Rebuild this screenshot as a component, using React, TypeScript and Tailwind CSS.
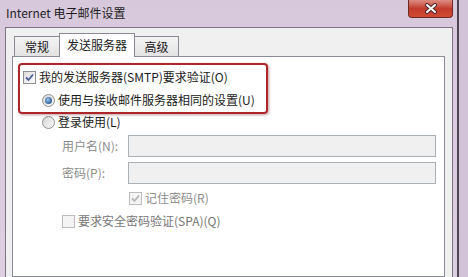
import React from 'react';

const font = { fontFamily: '"Noto Sans CJK SC", "Noto Sans", sans-serif' };

function CheckBox({ checked, disabled }: { checked?: boolean; disabled?: boolean }) {
  return (
    <span
      className={`flex h-[13px] w-[13px] shrink-0 items-center justify-center border ${
        disabled ? 'border-[#bcbcbc] bg-[#f4f4f4]' : 'border-[#8e8f8f] bg-gradient-to-br from-[#dcdcdc] to-[#fdfdfd]'
      }`}
    >
      {checked && (
        <svg width="9" height="9" viewBox="0 0 9 9">
          <path
            d="M1 4.5 L3.5 7 L8 1.5"
            fill="none"
            stroke={disabled ? '#b5b5b5' : '#4a5f97'}
            strokeWidth="1.8"
          />
        </svg>
      )}
    </span>
  );
}

function Radio({ checked }: { checked?: boolean }) {
  return (
    <span className="flex h-[13px] w-[13px] shrink-0 items-center justify-center rounded-full border border-[#8e8f8f] bg-gradient-to-br from-[#d6d6d6] to-[#fafafa]">
      {checked && (
        <span className="h-[7px] w-[7px] rounded-full bg-[radial-gradient(circle_at_40%_40%,#9cc3ea,#2c5f9c_70%)]" />
      )}
    </span>
  );
}

function Tab({ label, active }: { label: string; active?: boolean }) {
  if (active) {
    return (
      <div className="-ml-px flex h-[24px] w-[76px] items-center justify-center border border-b-0 border-[#898c95] bg-white pb-[1px] text-[12px] text-[#1a1a1a]">
        {label}
      </div>
    );
  }
  return (
    <div className="-ml-px flex h-[21px] w-[46px] items-center justify-center border border-[#898c95] bg-gradient-to-b from-[#f3f3f3] to-[#e3e3e3] text-[12px] text-[#1a1a1a] first:ml-[2px]">
      {label}
    </div>
  );
}

export default function App() {
  return (
    <div className="flex h-[277px] w-[468px] overflow-hidden bg-[#d3c3d8]" style={font}>
      <div className="flex h-full w-[459px] shrink-0 flex-col border-r-2 border-[#4d4752] bg-gradient-to-b from-[#d8c8dc] to-[#dccfe0]">
        {/* title bar */}
        <div className="flex h-[27px] shrink-0 items-start">
          <span className="pl-[6px] pt-[5px] text-[12px] leading-[16px] text-[#1e1e1e]">Internet 电子邮件设置</span>
          <div className="ml-auto mr-[4px] flex h-[18px] w-[45px] items-center justify-center rounded-b-[4px] border border-t-0 border-[#6b2a24] bg-gradient-to-b from-[#dc8d82] via-[#c23b2d] to-[#d24c32]">
            <svg width="14" height="11" viewBox="0 0 14 11">
              <path d="M3 2 L11 9 M11 2 L3 9" stroke="#4a2a2a" strokeWidth="4" strokeLinecap="round" />
              <path d="M3 2 L11 9 M11 2 L3 9" stroke="#ffffff" strokeWidth="2" strokeLinecap="round" />
            </svg>
          </div>
        </div>

        {/* client */}
        <div className="flex flex-1 pl-[5px] pr-[4px]">
          <div className="flex flex-1 flex-col border-l border-r border-t border-[#7d7283] bg-[#f0f0f0] pl-[6px] pt-[5px]">
            <div className="relative z-10 -mb-px flex h-[24px] items-end">
              <Tab label="常规" />
              <Tab label="发送服务器" active />
              <div className="-ml-px flex h-[21px] w-[45px] items-center justify-center border border-[#898c95] bg-gradient-to-b from-[#f3f3f3] to-[#e3e3e3] text-[12px] text-[#1a1a1a]">
                高级
              </div>
            </div>

            <div className="relative flex w-[433px] flex-1 flex-col border border-[#898c95] bg-white text-[12px] leading-[16px] text-[#1a1a1a]">
              {/* highlight annotation */}
              <div className="absolute left-[5px] top-[6px] h-[51px] w-[250px] rounded-[4px] border-2 border-[#ad262b] shadow-[1px_1px_3px_rgba(120,40,40,0.45)]" />

              <div className="mt-[10px] flex h-[20px] items-center gap-[3px] pl-[10px]">
                <CheckBox checked />
                <span>我的发送服务器(SMTP)要求验证(O)</span>
              </div>
              <div className="mt-[3px] flex h-[20px] items-center gap-[3px] pl-[29px]">
                <Radio checked />
                <span>使用与接收邮件服务器相同的设置(U)</span>
              </div>
              <div className="mt-[2px] flex h-[20px] items-center gap-[3px] pl-[29px]">
                <Radio />
                <span>登录使用(L)</span>
              </div>
              <div className="mt-[3px] flex h-[22px] items-center pl-[49px]">
                <span className="w-[66px] text-[#8c8c8c]">用户名(N):</span>
                <div className="h-[22px] w-[308px] border border-[#a9b0b6] bg-[#f0f0f0]" />
              </div>
              <div className="mt-[5px] flex h-[22px] items-center pl-[49px]">
                <span className="w-[66px] text-[#8c8c8c]">密码(P):</span>
                <div className="h-[22px] w-[308px] border border-[#a9b0b6] bg-[#f0f0f0]" />
              </div>
              <div className="mt-[4px] flex h-[20px] items-center gap-[3px] pl-[116px]">
                <CheckBox checked disabled />
                <span className="text-[#8c8c8c]">记住密码(R)</span>
              </div>
              <div className="mt-[3px] flex h-[20px] items-center gap-[3px] pl-[49px]">
                <CheckBox disabled />
                <span className="text-[#767676]">要求安全密码验证(SPA)(Q)</span>
              </div>
            </div>
          </div>
        </div>
      </div>
      <div className="flex-1" />
    </div>
  );
}
